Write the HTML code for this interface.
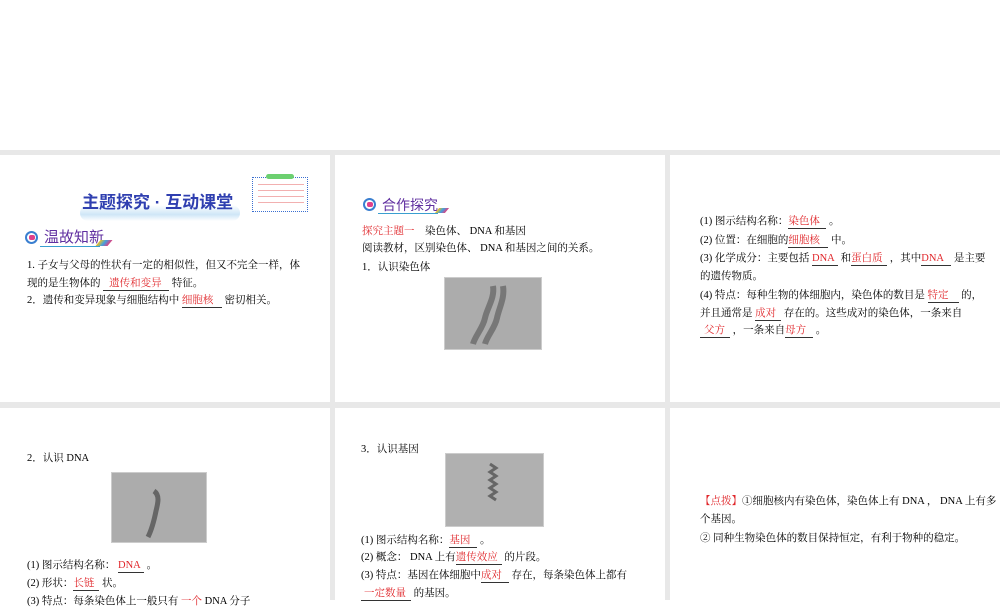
<!DOCTYPE html>
<html><head><meta charset="utf-8"><style>
*{margin:0;padding:0;box-sizing:border-box}
body{width:1000px;height:600px;background:#fff;position:relative;overflow:hidden;font-family:"Liberation Serif","Noto Serif CJK SC","Noto Sans CJK SC",serif;font-size:10.5px;color:#000}
.g{position:absolute;background:#e8e8e8}
.t{position:absolute;white-space:nowrap;line-height:14px}
.r{color:#e0262a}
.u{display:inline-block;border-bottom:1px solid #333;line-height:12px;text-align:left}
.img{position:absolute;background:#acacac;border:1px solid #ccc}
</style></head><body>
<div class="g" style="left:0;top:150px;width:1000px;height:5px"></div>
<div class="g" style="left:0;top:402px;width:1000px;height:6px"></div>
<div class="g" style="left:330px;top:150px;width:5px;height:450px"></div>
<div class="g" style="left:665px;top:150px;width:5px;height:450px"></div>

<!-- slide 1 -->
<div style="position:absolute;left:80px;top:205px;width:160px;height:16px;background:linear-gradient(#fff,#cfe6f7 60%,#fff);border-radius:8px"></div>
<div class="t" style="left:82px;top:192px;font:bold 17px 'Liberation Sans','Noto Sans CJK SC',sans-serif;color:#2f3fb0;line-height:22px">主题探究 · 互动课堂</div>
<div style="position:absolute;left:252px;top:177px;width:56px;height:35px;border:1px dotted #3a6fd0"></div>
<div style="position:absolute;left:266px;top:174px;width:28px;height:5px;background:#6cd070;border-radius:3px"></div>
<div style="position:absolute;left:258px;top:182px;width:46px;height:26px;background:repeating-linear-gradient(#fff 0 2px,#f2b0b0 2px 3px,#fff 3px 6px)"></div>
<div style="position:absolute;left:25px;top:231px;width:13px;height:13px;border:2px solid #3a7fd0;border-radius:50%"><div style="position:absolute;left:2px;top:2px;width:6px;height:5px;background:#e0408a;border-radius:2px"></div></div>
<div class="t" style="left:44px;top:229px;font:15px 'Liberation Sans','Noto Sans CJK SC',sans-serif;color:#6030a0;line-height:18px">温故知新</div>
<div style="position:absolute;left:40px;top:246px;width:60px;height:1px;background:#3a9fd0"></div>
<div style="position:absolute;left:98px;top:240px;width:12px;height:6px;background:linear-gradient(90deg,#f0c020,#40a0e0,#e04080);transform:skewX(-40deg)"></div>
<div class="t" style="left:27px;top:259px">1. 子女与父母的性状有一定的相似性，但又不完全一样，体</div>
<div class="t" style="left:27px;top:277px">现的是生物体的 <span class="u r" style="width:66px;padding-left:6px">遗传和变异</span> 特征。</div>
<div class="t" style="left:27px;top:294px">2．遗传和变异现象与细胞结构中 <span class="u r" style="width:40px">细胞核</span> 密切相关。</div>

<!-- slide 2 -->
<div style="position:absolute;left:363px;top:198px;width:13px;height:13px;border:2px solid #3a7fd0;border-radius:50%"><div style="position:absolute;left:2px;top:2px;width:6px;height:5px;background:#e0408a;border-radius:2px"></div></div>
<div class="t" style="left:382px;top:196px;font:14px 'Liberation Sans','Noto Sans CJK SC',sans-serif;color:#6030a0;line-height:18px">合作探究</div>
<div style="position:absolute;left:378px;top:213px;width:60px;height:1px;background:#3a9fd0"></div>
<div style="position:absolute;left:437px;top:208px;width:10px;height:5px;background:linear-gradient(90deg,#f0c020,#40a0e0,#e04080);transform:skewX(-40deg)"></div>
<div class="t" style="left:362px;top:225px"><span class="r">探究主题一</span>　染色体、 DNA 和基因</div>
<div class="t" style="left:362px;top:242px">阅读教材，区别染色体、 DNA 和基因之间的关系。</div>
<div class="t" style="left:362px;top:261px">1．认识染色体</div>
<div class="img" style="left:444px;top:277px;width:98px;height:73px"><svg width="98" height="73"><path d="M48 8 C50 20,42 30,40 40 C38 50,30 58,28 66" stroke="#777" stroke-width="6" fill="none"/><path d="M58 8 C60 20,54 30,52 40 C50 50,42 58,40 66" stroke="#777" stroke-width="6" fill="none"/></svg></div>

<!-- slide 3 -->
<div class="t" style="left:700px;top:215px">(1) 图示结构名称：<span class="u r" style="width:38px">染色体</span> 。</div>
<div class="t" style="left:700px;top:234px">(2) 位置：在细胞的<span class="u r" style="width:40px">细胞核</span> 中。</div>
<div class="t" style="left:700px;top:252px">(3) 化学成分：主要包括 <span class="u r" style="width:26px">DNA</span> 和<span class="u r" style="width:36px">蛋白质</span> ，其中<span class="u r" style="width:30px">DNA</span> 是主要</div>
<div class="t" style="left:700px;top:270px">的遗传物质。</div>
<div class="t" style="left:700px;top:289px">(4) 特点：每种生物的体细胞内，染色体的数目是 <span class="u r" style="width:31px">特定</span> 的，</div>
<div class="t" style="left:700px;top:307px">并且通常是 <span class="u r" style="width:26px">成对</span> 存在的。这些成对的染色体，一条来自</div>
<div class="t" style="left:700px;top:324px"><span class="u r" style="width:30px;padding-left:4px">父方</span> ，一条来自<span class="u r" style="width:28px">母方</span> 。</div>

<!-- slide 4 -->
<div class="t" style="left:27px;top:452px">2．认识 DNA</div>
<div class="img" style="left:111px;top:472px;width:96px;height:71px"><svg width="96" height="71"><path d="M42 18 C48 22,46 30,44 38 C42 48,40 56,36 64" stroke="#666" stroke-width="5" fill="none"/></svg></div>
<div class="t" style="left:27px;top:559px">(1) 图示结构名称： <span class="u r" style="width:26px">DNA</span> 。</div>
<div class="t" style="left:27px;top:577px">(2) 形状：<span class="u r" style="width:26px">长链</span> 状。</div>
<div class="t" style="left:27px;top:595px">(3) 特点：每条染色体上一般只有 <span class="r">一个</span> DNA 分子</div>

<!-- slide 5 -->
<div class="t" style="left:361px;top:443px">3．认识基因</div>
<div class="img" style="left:445px;top:453px;width:99px;height:74px;background:#b0b0b0"><svg width="99" height="74"><path d="M44 10 l6 4 l-6 4 l6 4 l-6 4 l6 4 l-6 4 l6 4 l-6 4 l6 4" stroke="#666" stroke-width="3" fill="none"/></svg></div>
<div class="t" style="left:361px;top:534px">(1) 图示结构名称：<span class="u r" style="width:28px">基因</span> 。</div>
<div class="t" style="left:361px;top:551px">(2) 概念： DNA 上有<span class="u r" style="width:46px">遗传效应</span> 的片段。</div>
<div class="t" style="left:361px;top:569px">(3) 特点：基因在体细胞中<span class="u r" style="width:28px">成对</span> 存在，每条染色体上都有</div>
<div class="t" style="left:361px;top:587px"><span class="u r" style="width:50px;padding-left:3px">一定数量</span> 的基因。</div>

<!-- slide 6 -->
<div class="t" style="left:700px;top:495px"><span class="r">【点拨】</span>①细胞核内有染色体，染色体上有 DNA ， DNA 上有多</div>
<div class="t" style="left:700px;top:513px">个基因。</div>
<div class="t" style="left:700px;top:532px">② 同种生物染色体的数目保持恒定，有利于物种的稳定。</div>
</body></html>
